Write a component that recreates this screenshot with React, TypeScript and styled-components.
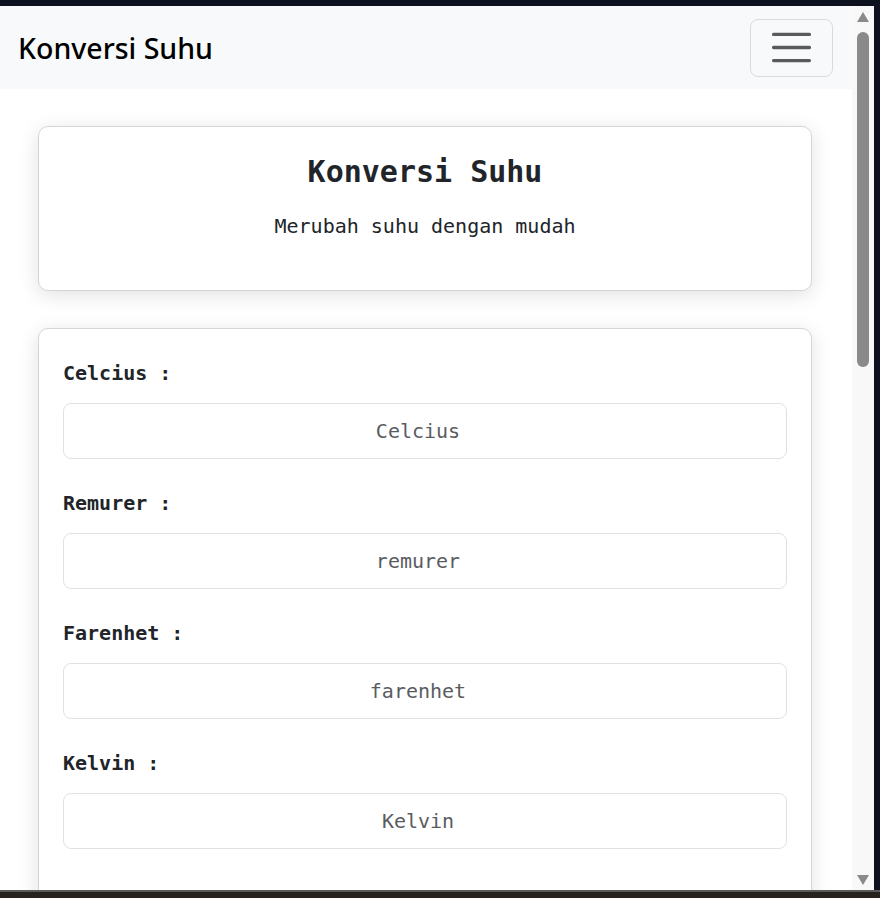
import { createGlobalStyle } from "styled-components"
import styled from "styled-components"

const GlobalStyle = createGlobalStyle`
    html, body {
        margin: 0;
        padding: 0;
        background-color: #0e121e;
        overflow: hidden;
    }
    * {
        box-sizing: border-box;
    }
`

const Frame = styled.div`
    display: flex;
    flex-direction: column;
    width: 880px;
    height: 898px;
    background-color: #0e121e;
`

const TopEdge = styled.div`
    height: 6px;
    flex-shrink: 0;
`

const Middle = styled.div`
    display: flex;
    flex: 1;
    min-height: 0;
`

const Viewport = styled.div`
    width: 852px;
    height: 100%;
    overflow: hidden;
    background-color: #ffffff;
`

const ScrollTrack = styled.div`
    width: 22px;
    display: flex;
    flex-direction: column;
    align-items: center;
    background-color: #f8f8f8;
    padding-top: 6px;
`

const Arrow = styled.div<{ $down?: boolean }>`
    width: 0;
    height: 0;
    border-left: 6px solid transparent;
    border-right: 6px solid transparent;
    ${(p) => p.$down
        ? "border-top: 10px solid #8a8a8a; margin-top: auto; margin-bottom: 5px;"
        : "border-bottom: 10px solid #8a8a8a;"}
`

const Thumb = styled.div`
    width: 12px;
    height: 335px;
    margin-top: 10px;
    border-radius: 6px;
    background-color: #8a8a8a;
`

const RightEdge = styled.div`
    width: 6px;
`

const BottomEdge = styled.div`
    height: 8px;
    flex-shrink: 0;
    border-top: 2px solid #5a5a5a;
    background-color: #26231f;
`

const Navbar = styled.nav`
    display: flex;
    align-items: center;
    justify-content: space-between;
    height: 83px;
    padding: 0 19px 0 18px;
    background-color: #f8f9fa;
`

const Brand = styled.a`
    font-family: "Noto Sans", "Open Sans", sans-serif;
    font-size: 28.5px;
    font-weight: 500;
    color: #000000;
    text-decoration: none;
`

const Toggler = styled.button`
    display: flex;
    align-items: center;
    justify-content: center;
    width: 83px;
    height: 58px;
    padding: 0;
    border: 1px solid rgba(0, 0, 0, 0.12);
    border-radius: 8px;
    background: transparent;
    cursor: pointer;
`

const Main = styled.main`
    display: flex;
    flex-direction: column;
    gap: 37px;
    padding: 37px 40px 0 38px;
    font-family: "DejaVu Sans Mono", "Liberation Mono", monospace;
    color: #212529;
`

const Card = styled.div`
    border: 1px solid #d6d6d6;
    border-radius: 10px;
    background-color: #ffffff;
    box-shadow: 0 4px 20px rgba(0, 0, 0, 0.12);
`

const HeaderCard = styled(Card)`
    display: flex;
    flex-direction: column;
    align-items: center;
    height: 165px;
    padding-top: 27px;
`

const Title = styled.h1`
    margin: 0 0 21px;
    font-size: 30px;
    line-height: 36px;
    font-weight: 700;
`

const Subtitle = styled.p`
    margin: 0;
    font-size: 20px;
    line-height: 30px;
`

const FormCard = styled(Card)`
    display: flex;
    flex-direction: column;
    padding: 29px 24px 60px;
`

const Field = styled.div`
    display: flex;
    flex-direction: column;
    margin-bottom: 29px;
`

const Label = styled.label`
    font-size: 20px;
    line-height: 30px;
    font-weight: 700;
    margin-bottom: 15px;
`

const Input = styled.input`
    height: 56px;
    width: 100%;
    padding: 0 14px 0 0;
    border: 1px solid #dee2e6;
    border-radius: 8px;
    font-family: inherit;
    font-size: 20px;
    text-align: center;
    color: #212529;
    &::placeholder {
        color: #595c5f;
    }
`

const fields = [
    { label: "Celcius :", placeholder: "Celcius" },
    { label: "Remurer :", placeholder: "remurer" },
    { label: "Farenhet :", placeholder: "farenhet" },
    { label: "Kelvin :", placeholder: "Kelvin" },
]

function MenuIcon() {
    return (
        <svg width="49" height="49" viewBox="0 0 30 30">
            <path
                d="M4 7h22M4 15h22M4 23h22"
                stroke="rgba(33,37,41,0.75)"
                strokeWidth="2"
                strokeLinecap="round"
            />
        </svg>
    )
}

export default function App() {
    return (
        <>
            <GlobalStyle />
            <Frame>
                <TopEdge />
                <Middle>
                    <Viewport>
                        <Navbar>
                            <Brand href="#">Konversi Suhu</Brand>
                            <Toggler aria-label="menu">
                                <MenuIcon />
                            </Toggler>
                        </Navbar>
                        <Main>
                            <HeaderCard>
                                <Title>Konversi Suhu</Title>
                                <Subtitle>Merubah suhu dengan mudah</Subtitle>
                            </HeaderCard>
                            <FormCard>
                                {fields.map((f) => (
                                    <Field key={f.label}>
                                        <Label>{f.label}</Label>
                                        <Input placeholder={f.placeholder} />
                                    </Field>
                                ))}
                            </FormCard>
                        </Main>
                    </Viewport>
                    <ScrollTrack>
                        <Arrow />
                        <Thumb />
                        <Arrow $down />
                    </ScrollTrack>
                    <RightEdge />
                </Middle>
                <BottomEdge />
            </Frame>
        </>
    )
}
